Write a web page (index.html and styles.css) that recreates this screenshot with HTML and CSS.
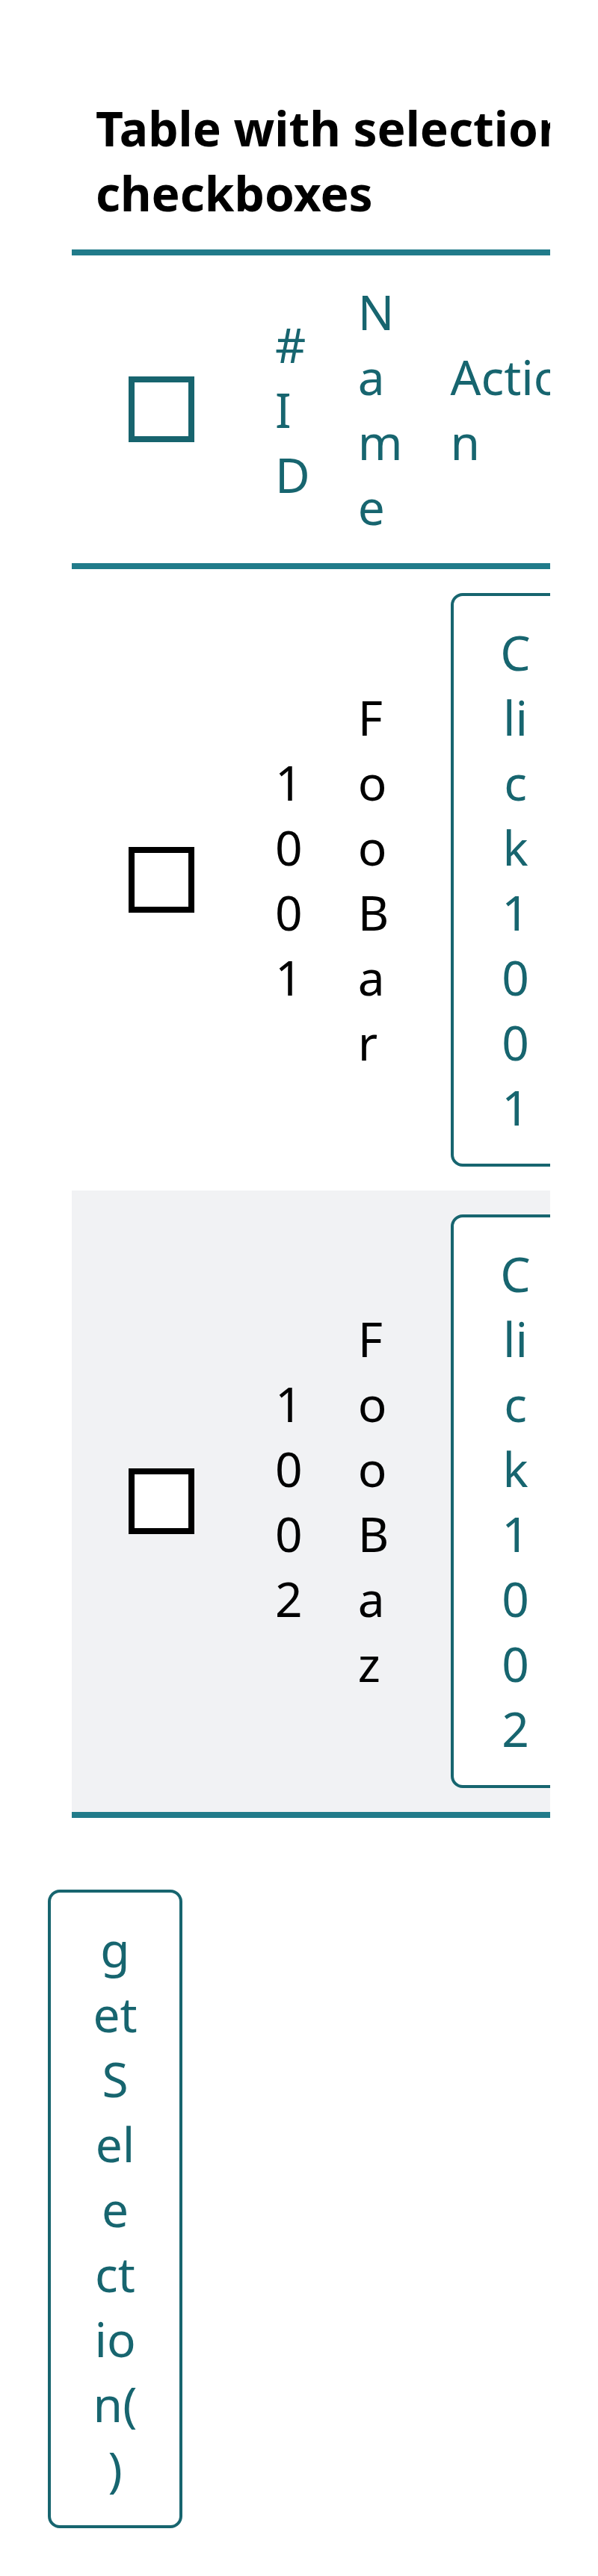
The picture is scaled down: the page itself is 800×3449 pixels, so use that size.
FILE: index.html
```html
<!DOCTYPE html>
<html lang="en">

<head>
  <meta charset="UTF-8" />
  <meta name="viewport" content="width=device-width, initial-scale=1.0" />
  <title>Table with selection checkboxes</title>
  <link rel="stylesheet" href="styles.css">
</head>

<body>
  <main class="page">
    <div class="table-wrap">
      <table class="data-table">
        <caption>Table with selection checkboxes</caption>
        <thead>
          <tr>
            <th class="select-col"><input type="checkbox" class="check check-head" aria-label="Select all" /></th>
            <th>#ID</th>
            <th>Name</th>
            <th>Action</th>
          </tr>
        </thead>
        <tbody>
          <tr>
            <td class="select-col"><input type="checkbox" class="check" aria-label="Select 1001" /></td>
            <td>1001</td>
            <td>FooBar</td>
            <td><button class="btn btn-row">Click1001</button></td>
          </tr>
          <tr class="row-alt">
            <td class="select-col"><input type="checkbox" class="check" aria-label="Select 1002" /></td>
            <td>1002</td>
            <td>FooBaz</td>
            <td><button class="btn btn-row">Click1002</button></td>
          </tr>
        </tbody>
      </table>
    </div>

    <button class="btn btn-selection">getSelection()</button>
  </main>
</body>

</html>
```

FILE: styles.css
```css
body {
  margin: 0;
  font-family: 'Noto Sans', 'Open Sans', sans-serif;
  font-size: 64px;
  color: #000;
  background: #ffffff;
}

.page {
  padding: 128px 64px 64px;
}

.table-wrap {
  margin-left: 32px;
  overflow: hidden;
}

.data-table {
  border-collapse: separate;
  border-spacing: 0;
}

.data-table caption {
  text-align: left;
  font-weight: 700;
  padding: 0 0 32px 32px;
}

th,
td {
  padding: 32px;
  text-align: left;
  vertical-align: middle;
  overflow-wrap: anywhere;
}

th {
  font-weight: 400;
  color: #17656f;
  border-top: 8px solid #217b8a;
  border-bottom: 8px solid #217b8a;
}

tbody tr:last-child td {
  border-bottom: 8px solid #217b8a;
}

.row-alt {
  background: #f1f2f4;
}

.check {
  appearance: none;
  -webkit-appearance: none;
  display: block;
  width: 88px;
  height: 88px;
  margin: 0 44px;
  box-sizing: border-box;
  border: 8px solid #000;
  background: #fff;
}

.check-head {
  border-color: #17646e;
}

.btn {
  display: block;
  box-sizing: border-box;
  font-family: 'Noto Sans', 'Open Sans', sans-serif;
  font-size: 64px;
  line-height: 87px;
  color: #17656f;
  background: #fff;
  border: 4px solid #17656f;
  border-radius: 16px;
  text-align: center;
  overflow-wrap: anywhere;
  cursor: pointer;
}

.btn-row {
  width: 174px;
  padding: 32px 56px;
}

.btn-selection {
  width: 180px;
  padding: 32px 53px;
  margin-top: 96px;
}
```
